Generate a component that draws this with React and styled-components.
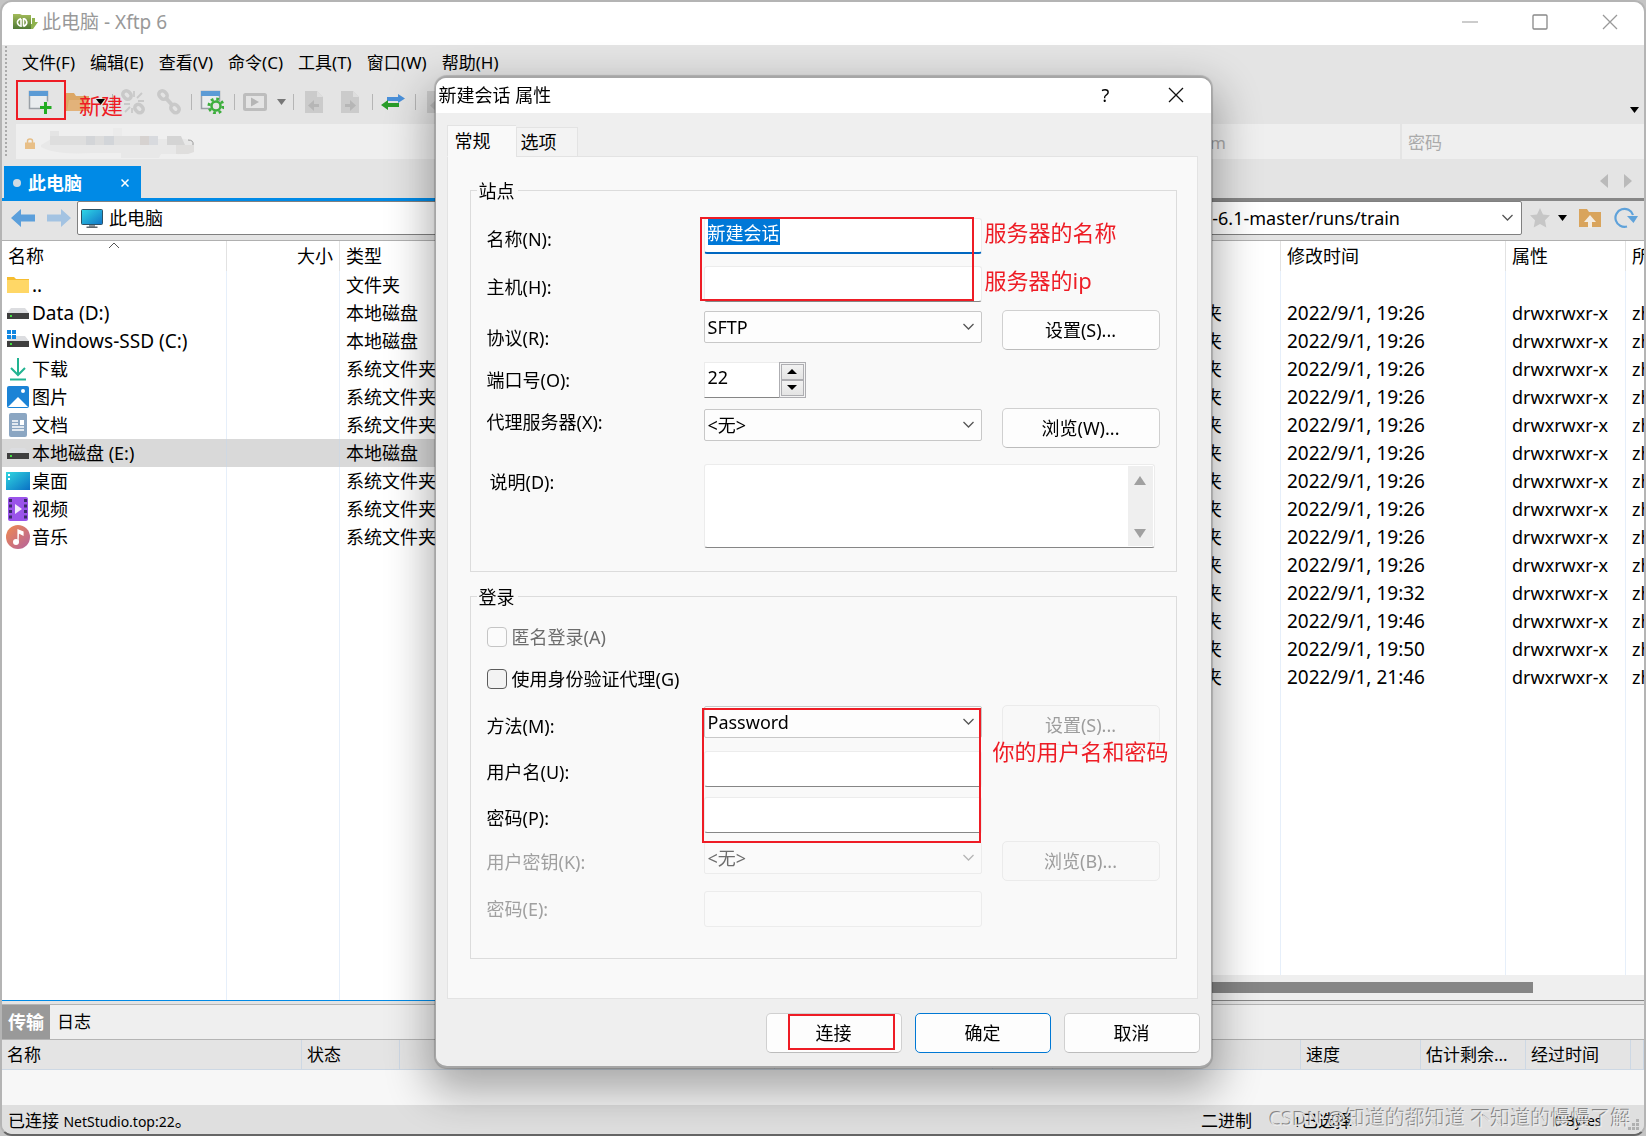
import React, { useEffect, useRef } from "react";
import styled, { createGlobalStyle, css } from "styled-components";

const RED = "#ee1c25";
const BLUE = "#008ae6";

const Global = createGlobalStyle`
  * { box-sizing: border-box; }
  html, body { margin: 0; height: 100%; }
  #root { height: 100%; }
  body {
    background: #c4c4c4;
    color: #000;
    font: 18px/24px "Noto Sans", "Noto Sans CJK SC", sans-serif;
    overflow: hidden;
  }
  button, input, select, textarea {
    font: inherit;
    color: inherit;
    margin: 0;
    padding: 0;
    border: 0;
    border-radius: 0;
    background: none;
    outline: none;
  }
  svg { display: block; flex: none; }
`;

/* ---------- main window ---------- */

const Window = styled.div`
  position: relative;
  display: flex;
  flex-direction: column;
  height: 100vh;
  min-height: 1080px;
  border: 2px solid #b4b4b4;
  border-bottom-color: #666;
  border-radius: 12px;
  background: #e4e4e4;
  overflow: hidden;
`;

const TitleBar = styled.header`
  display: flex;
  align-items: center;
  height: 43px;
  padding: 0 26px 3px 10px;
  gap: 4px;
  background: #fff;
  color: #999;
  h1 { flex: 1; margin: 0; font-size: 19px; font-weight: 400; }
`;

const CaptionButtons = styled.div`
  display: flex;
  gap: 54px;
`;

const IconButton = styled.button`
  display: flex;
  align-items: center;
  justify-content: center;
  width: ${(p) => p.$w || 16}px;
  height: ${(p) => p.$h || 24}px;
  flex: none;
`;

const Bars = styled.div`
  display: flex;
  flex-direction: column;
  height: 113px;
  padding-left: 14px;
  background: radial-gradient(circle, #aaa 1px, transparent 1px) 2px 0 / 4px 4px repeat-y;
`;

const MenuBar = styled.nav`
  display: flex;
  align-items: center;
  height: 36px;
  padding-left: 6px;
  gap: 15px;
  font-size: 17px;
`;

const ToolBar = styled.div`
  position: relative;
  display: flex;
  align-items: center;
  height: 43px;
  padding-bottom: 2px;
`;

const Divider = styled.span`
  width: 7px;
  height: 16px;
  border-left: 1px solid #b5b5b5;
  margin-left: 4px;
  margin-right: -4px;
`;

const Spacer = styled.span`
  flex: 1;
`;

const MoreButton = styled(IconButton)`
  align-self: flex-end;
`;

const SessionBar = styled.div`
  display: grid;
  grid-template-columns: 1fr 210px 242px;
  column-gap: 2px;
  height: 34px;
  color: #aaa;
  font-size: 17px;
`;

const SessionCell = styled.div`
  display: flex;
  align-items: center;
  min-width: 0;
  padding: 3px ${(p) => p.$pad || 6}px 0;
  gap: 6px;
  background: #efefef;
  input { width: 100%; min-width: 0; }
  input::placeholder { color: #aaa; opacity: 1; }
`;

const Panes = styled.main`
  display: grid;
  grid-template-columns: 1fr 1fr;
  flex: 1;
  min-height: 0;
`;

const Pane = styled.section`
  display: flex;
  flex-direction: column;
  min-width: 0;
  min-height: 0;
  border-bottom: 1px solid ${(p) => p.$accent};
`;

const TabStrip = styled.div`
  display: flex;
  align-items: flex-end;
  justify-content: ${(p) => p.$end ? "flex-end" : "flex-start"};
  height: 43px;
  padding: 0 ${(p) => p.$end ? 10 : 2}px;
  gap: 12px;
  border-bottom: 3px solid ${(p) => p.$accent};
`;

const PaneTab = styled.div`
  display: flex;
  align-items: center;
  width: 137px;
  height: 32px;
  padding: 2px 12px 0 9px;
  gap: 7px;
  background: ${BLUE};
  color: #fff;
  font-weight: 700;
  i { width: 8px; height: 8px; border-radius: 50%; background: #cfdbe3; }
  span { flex: 1; }
`;

const StripArrow = styled(IconButton)`
  height: 34px;
  width: 12px;
`;

const NavBar = styled.div`
  display: flex;
  align-items: center;
  height: 40px;
  padding: 0 5px 5px 4px;
  border-bottom: 1px solid #b0b0b0;
`;

const PathBox = styled.div`
  display: flex;
  align-items: center;
  flex: 1;
  min-width: 0;
  height: 34px;
  padding: 0 8px 0 3px;
  gap: 6px;
  border: 1px solid #808080;
  border-radius: 2px;
  background: #fff;
  input { flex: 1; min-width: 0; }
`;

const RemotePath = styled.input`
  text-align: right;
  padding-right: 96px;
`;

const ListArea = styled.div`
  flex: 1;
  min-height: 0;
  background: #fff;
  overflow: hidden;
`;

const FileTable = styled.table`
  width: 100%;
  height: 100%;
  table-layout: fixed;
  border-collapse: separate;
  border-spacing: 0;
  th, td {
    padding: 0 0 0 6px;
    text-align: left;
    font-weight: 400;
    white-space: nowrap;
    overflow: hidden;
    border-right: 1px solid #e6effa;
  }
  th { height: 30px; border-right-color: #e2e2e2; position: relative; }
  th:last-child, td:last-child { border-right: 0; }
  th.size { text-align: right; padding-right: 6px; }
  tr.item td { height: 28px; }
  tr.selected td { background: #d9d9d9; border-right-color: #cfd8e2; }
`;

const SortMark = styled.svg`
  position: absolute;
  top: 1px;
  left: 106px;
`;

const NameCell = styled.span`
  display: flex;
  align-items: center;
  gap: 2px;
  margin-left: -2px;
`;

/* Latin-only cell text is set one step larger than the Chinese text beside it. */
const LatinCell = styled.span`
  font-size: 19px;
`;

const ScrollTrack = styled.div`
  height: 25px;
  padding: 7px 111px 7px 0;
  background: #efefef;
  div { height: 11px; background: #868686; }
`;

const Transfer = styled.section`
  margin-top: 3px;
  border-top: 1px solid #b4b4b4;
  background: #f7f7f7;
  height: 101px;
  font-size: 17px;
`;

const TransferTabs = styled.div`
  display: flex;
  height: 35px;
  background: #efefef;
  border-bottom: 1px solid #b4b4b4;
`;

const TransferTab = styled.button`
  padding: 0 7px;
  ${(p) => p.$active && css`
    width: 48px;
    padding: 0 6px;
    background: #999;
    color: #fff;
    font-size: 18px;
    font-weight: 700;
  `}
`;

const QueueTable = styled.table`
  width: 100%;
  table-layout: fixed;
  border-spacing: 0;
  background: #e4e4e4;
  th {
    height: 30px;
    padding: 0 0 0 5px;
    text-align: left;
    font-weight: 400;
    white-space: nowrap;
    overflow: hidden;
    border-right: 1px solid #cdd8e4;
    border-bottom: 1px solid #cdd8e4;
  }
`;

const StatusBar = styled.footer`
  position: relative;
  display: grid;
  grid-template-columns: 1fr 92px 261px 90px;
  align-items: center;
  height: 29px;
  padding: 3px 0 0 6px;
  background: #dfdfdf;
  font-size: 17px;
`;

const Latin = styled.span`
  font-size: 14px;
`;

const Watermark = styled.div`
  position: absolute;
  right: 13px;
  bottom: 3px;
  font-size: 20px;
  color: rgba(238, 238, 238, 0.85);
  text-shadow: -1px -1px 0 rgba(110, 110, 110, 0.8);
  white-space: nowrap;
`;

const ResizeGrip = styled.svg`
  position: absolute;
  right: 4px;
  bottom: 3px;
`;

/* ---------- annotations ---------- */

const RedBox = styled.span`
  position: absolute;
  left: ${(p) => p.$x}px;
  top: ${(p) => p.$y}px;
  width: ${(p) => p.$w}px;
  height: ${(p) => p.$h}px;
  border: 2px solid ${RED};
  pointer-events: none;
`;

const RedNote = styled.span`
  position: absolute;
  left: ${(p) => p.$x}px;
  top: ${(p) => p.$y}px;
  color: ${RED};
  font-size: 22px;
  line-height: 28px;
  white-space: nowrap;
`;

/* ---------- dialog ---------- */

const Overlay = styled.div`
  position: fixed;
  inset: 0;
  display: flex;
  align-items: center;
  justify-content: center;
  padding-top: 7px;
`;

const Dialog = styled.div`
  position: relative;
  width: 777px;
  border: 1px solid #a6a6a6;
  border-top-width: 2px;
  border-bottom-width: 2px;
  border-radius: 12px;
  background: #efefef;
  box-shadow: 0 0 1px 1px rgba(0, 0, 0, 0.18), 0 18px 44px 6px rgba(0, 0, 0, 0.32);
`;

const DialogTitle = styled.header`
  display: flex;
  align-items: center;
  height: 35px;
  padding: 0 27px 1px 3px;
  gap: 56px;
  border-radius: 10px 10px 0 0;
  background: #fff;
  h2 { flex: 1; margin: 0; font-size: 18px; font-weight: 400; }
`;

const DialogBody = styled.form`
  padding: 12px 13px 13px 11px;
`;

const Tabs = styled.div`
  position: relative;
  display: flex;
  align-items: flex-end;
  margin-bottom: -1px;
`;

const Tab = styled.button`
  width: ${(p) => p.$active ? 69 : 62}px;
  height: ${(p) => p.$active ? 32 : 30}px;
  padding: 0 0 0 ${(p) => p.$active ? 7 : 4}px;
  text-align: left;
  border: 1px solid #e3e3e3;
  background: #f3f3f3;
  ${(p) => p.$active && css`
    background: #f9f9f9;
    border-bottom-color: #f9f9f9;
    border-right: 0;
  `}
`;

const TabPanel = styled.div`
  display: flex;
  flex-direction: column;
  gap: 13px;
  padding: 22px 20px 39px 22px;
  border: 1px solid #e3e3e3;
  background: #f9f9f9;
`;

const Group = styled.fieldset`
  min-width: 0;
  margin: 0;
  padding: ${(p) => p.$top}px 16px ${(p) => p.$bottom}px;
  border: 1px solid #dcdcdc;
  legend { margin-left: -10px; padding: 0 3px 0 2px; line-height: 24px; }
`;

const Row = styled.div`
  display: grid;
  grid-template-columns: 217px 278px 158px;
  align-items: start;
  margin-top: ${(p) => p.$gap || 0}px;
  & > button { margin-left: 20px; }
`;

const Label = styled.label`
  padding-top: ${(p) => p.$top ?? 9}px;
  padding-left: ${(p) => p.$indent ? 3 : 0}px;
  color: ${(p) => p.$off ? "#a0a0a0" : "#000"};
`;

const TextBox = styled.input`
  width: 100%;
  height: 36px;
  padding: 0 3px 6px;
  border: 1px solid #ececec;
  border-bottom: 1px solid #868686;
  border-radius: 3px;
  background: #fff;
  &:disabled { border-color: #ececec; background: #fafafa; }
  ${(p) => p.$focus && css`
    border-bottom: 2px solid #0067c0;
    &::selection { background: #0078d7; color: #fff; }
  `}
`;

const SelectFrame = styled.div`
  position: relative;
  margin: 1px 0 7px;
  color: ${(p) => p.$off ? "#6d6d6d" : "#000"};
  select {
    display: block;
    appearance: none;
    width: 100%;
    height: 32px;
    padding: 0 3px;
    border: 1px solid ${(p) => p.$off ? "#ececec" : "#c8c8c8"};
    border-radius: 2px;
    background: ${(p) => p.$off ? "#fafafa" : "#fdfdfd"};
    opacity: 1;
  }
  svg {
    position: absolute;
    right: 8px;
    top: 12px;
    pointer-events: none;
  }
`;

const PushButton = styled.button`
  width: ${(p) => p.$w || 158}px;
  height: 40px;
  border: 1px solid #d0d0d0;
  border-bottom-color: #bcbcbc;
  border-radius: 5px;
  background: #fdfdfd;
  &:disabled { border-color: #ebebeb; background: #f8f8f8; color: #9d9d9d; }
  ${(p) => p.$primary && css`
    border-color: #0078d4;
  `}
`;

const PortBox = styled.div`
  display: flex;
  width: 102px;
  height: 36px;
  input {
    flex: 1;
    min-width: 0;
    padding: 0 3px 6px;
    border: 1px solid #ececec;
    border-right: 0;
    border-bottom-color: #868686;
    background: #fff;
  }
`;

const Spinner = styled.div`
  display: flex;
  flex-direction: column;
  width: 27px;
  padding: 1px;
  border: 1px solid #aeaeb2;
  background: #f4f4f4;
  button {
    display: flex;
    flex: 1;
    align-items: center;
    justify-content: center;
    border: 1px solid #aeaeb2;
    background: linear-gradient(#f2f2f2, #e4e4e4);
  }
`;

const NoteBox = styled.div`
  display: flex;
  width: 451px;
  height: 84px;
  padding: 1px;
  border: 1px solid #ececec;
  border-bottom-color: #868686;
  border-radius: 3px;
  background: #fff;
  textarea { flex: 1; resize: none; overflow: hidden; }
`;

const NoteScroll = styled.div`
  display: flex;
  flex-direction: column;
  justify-content: space-between;
  align-items: center;
  width: 25px;
  padding: 10px 0 8px;
  background: #efefef;
`;

const CheckLabel = styled.label`
  display: flex;
  align-items: center;
  height: 32px;
  gap: 5px;
  margin-top: ${(p) => p.$gap || 0}px;
  color: ${(p) => p.$off ? "#6d6d6d" : "#000"};
  input {
    appearance: none;
    width: 20px;
    height: 20px;
    border: 1px solid ${(p) => p.$off ? "#c5c5c5" : "#5c5c5c"};
    border-radius: 4px;
    background: ${(p) => p.$off ? "#fbfbfb" : "#f3f3f3"};
  }
`;

const DialogFooter = styled.div`
  display: flex;
  justify-content: flex-end;
  gap: 13px;
  margin-top: 14px;
  margin-right: -2px;
`;

/* ---------- icons ---------- */

const Triangle = ({ dir = "down", color = "#000", w = 9, h = 6 }) => {
  const d = {
    down: `M0 0H${w}L${w / 2} ${h}Z`,
    up: `M0 ${h}H${w}L${w / 2} 0Z`,
    left: `M${w} 0V${h}L0 ${h / 2}Z`,
    right: `M0 0V${h}L${w} ${h / 2}Z`,
  }[dir];
  return <svg width={w} height={h}><path d={d} fill={color} /></svg>;
};

const Chevron = ({ color = "#555" }) => (
  <svg width="11" height="8" fill="none" stroke={color} strokeWidth="1.3"><path d="M0.5 1L5.5 6L10.5 1" /></svg>
);

const Cross = ({ color, size = 16, sw = 1.3 }) => (
  <svg width={size} height={size} viewBox="0 0 16 16" fill="none" stroke={color} strokeWidth={sw}><path d="M1 1L15 15M15 1L1 15" /></svg>
);

const AppIcon = () => (
  <svg width="26" height="20" viewBox="0 0 26 20">
    <defs><linearGradient id="app" x1="0" y1="0" x2="0" y2="1"><stop offset="0" stopColor="#a3bb5a" /><stop offset="1" stopColor="#4f7a35" /></linearGradient></defs>
    <path d="M1 2h7l2 1h9v14H1z" fill="url(#app)" />
    <path d="M20 6h3v4h3l-5 7h-2v-5h1z" fill="#8fb34f" />
    <g fill="none" stroke="#fff" strokeWidth="1.600"><path d="M9 15V7M9 6.500Q5 8 5.500 11Q6 13 8 14" /><path d="M11.500 6v8.500M11.500 14.500Q15 13 14.800 10Q14 7 12 6.500" /></g>
  </svg>
);

const WindowGlyph = () => (
  <>
    <path d="M1.500 1.500h18v17h-18z" fill="#e9ecee" stroke="#9aa0a6" strokeWidth="1.500" />
    <path d="M1 1h19v5H1z" fill="#5b9bd5" />
  </>
);

const NewIcon = () => (
  <svg width="24" height="24" viewBox="0 0 24 24"><WindowGlyph /><path d="M12 17.500h12M18 11.500v12" stroke="#e4e4e4" strokeWidth="6" /><path d="M12 17.500h11.500M17.500 12v12" stroke="#22ac22" strokeWidth="3" /></svg>
);

const GearWindowIcon = () => (
  <svg width="24" height="24" viewBox="0 0 24 24"><WindowGlyph />
    <circle cx="16" cy="16" r="6" fill="#e4e4e4" />
    <circle cx="16" cy="16" r="7" fill="none" stroke="#3dae3d" strokeWidth="3" strokeDasharray="2.750 2.750" />
    <circle cx="16" cy="16" r="4.500" fill="none" stroke="#3dae3d" strokeWidth="2.500" />
  </svg>
);

const FolderIcon = () => (
  <svg width="26" height="20" viewBox="0 0 26 20"><path d="M0 1h9l2 3h13v15H0z" fill="#dca765" /><path d="M4 8h20v11H2z" fill="#e2b27a" /></svg>
);

const ChainIcon = ({ broken }) => (
  <svg width="26" height="26" viewBox="0 0 26 26" fill="none" stroke="#c9c9c9" strokeWidth="3.500">
    <rect x="2.500" y="2.500" width="9" height="7" rx="3.500" transform="rotate(45 7 6)" />
    <rect x="14.500" y="16" width="9" height="7" rx="3.500" transform="rotate(45 19 19.500)" />
    {broken ? <path d="M14 8V2M17 9l5-5M18 12h6M4 15h6M5 23l5-5M12 24v-5" strokeWidth="1.800" /> : <path d="M9 8l8 9" strokeWidth="4" />}
  </svg>
);

const PlayIcon = () => (
  <svg width="24" height="18" viewBox="0 0 24 18"><rect x="1.500" y="1.500" width="21" height="15" rx="1" fill="none" stroke="#bdbdbd" strokeWidth="3" /><path d="M8 4.500L16 9L8 13.500Z" fill="#b5b5b5" /></svg>
);

const DocIcon = ({ flip }) => (
  <svg width="20" height="22" viewBox="0 0 20 22"><path d="M1 0h12l6 6v16H1z" fill="#cbcbcb" /><path d="M13 0v6h6z" fill="#dedede" />
    <path d={flip ? "M5 13h5V9l6 5.500L10 20v-4H5z" : "M15 13h-5V9l-6 5.500L10 20v-4h5z"} fill="#b6b6b6" />
  </svg>
);

const SwapIcon = () => (
  <svg width="24" height="18" viewBox="0 0 24 18"><path d="M6 4h11V1l7 4.500L17 10V8H6z" fill="#4a90d9" /><path d="M18 10H7V7l-7 5l7 5v-3h11z" fill="#2a9d2a" /></svg>
);

const LockIcon = () => (
  <svg width="10" height="11" viewBox="0 0 10 11"><path d="M2.500 5V3a2.500 2 0 015 0v2" fill="none" stroke="#e6bd85" strokeWidth="1.500" /><path d="M0 4.500h10V11H0z" fill="#e8bf87" /></svg>
);

const Smudge = () => (
  <svg width="154" height="32" viewBox="0 0 154 32">
    <path d="M0 18L10 12H130Q152 10 152 18V24Q148 28 136 27H120L118 31H80V26H50Q14 28 0 20Z" fill="#e8e8e8" />
    <path d="M9 4h9v5H9z" fill="#e4e4e4" /><path d="M72 1h9v8h-9z" fill="#ebebeb" />
    <path d="M9 9h36v9H9z" fill="#dedede" /><path d="M45 9h9v9h-9z" fill="#d3d5d8" /><path d="M54 9h9v9h-9z" fill="#dcdcdc" />
    <path d="M63 9h10v9H63z" fill="#d2d5d9" /><path d="M73 9h26v9H73z" fill="#e0e0e0" /><path d="M99 9h9v9h-9z" fill="#d6d2d0" />
    <path d="M108 9h9v9h-9z" fill="#d8dade" /><path d="M126 9h14l4 9h-18z" fill="#d4d4d4" /><path d="M135 18h18v7l-6 2h-12z" fill="#dfdedd" />
    <path d="M147 13q6 0 5 5" fill="none" stroke="#999" />
  </svg>
);

const ArrowIcon = ({ flip, color }) => (
  <svg width="24" height="18" viewBox="0 0 24 18"><path d={flip ? "M24 9L14 0V5.500H0V12.500H14V18Z" : "M0 9L10 0V5.500H24V12.500H10V18Z"} fill={color} /></svg>
);

const MonitorIcon = () => (
  <svg width="22" height="19" viewBox="0 0 22 19">
    <defs><linearGradient id="mon" x1="0" y1="0" x2="1" y2="1"><stop offset="0" stopColor="#2fd8e6" /><stop offset="1" stopColor="#1173c8" /></linearGradient></defs>
    <path d="M8 15h6v3H8z" fill="#8a949c" /><path d="M5.500 17.500h11v1.500h-11z" fill="#5d666d" />
    <rect x="0.500" y="0.500" width="21" height="15" rx="1" fill="url(#mon)" stroke="#2d5266" />
  </svg>
);

const StarIcon = () => (
  <svg width="20" height="20" viewBox="0 0 20 20"><path d="M10 0l3 6.500 7 .8-5 4.900 1.300 7.300L10 16l-6.300 3.500L5 12.200 0 7.300l7-.8z" fill="#c6c6c6" /></svg>
);

const UpFolderIcon = () => (
  <svg width="22" height="19" viewBox="0 0 22 19"><path d="M0 0h8l2 3h12v15H0z" fill="#d9a45c" /><path d="M11 6l6 7h-4v6H9v-6H5z" fill="#f3ece2" /></svg>
);

const RefreshIcon = () => (
  <svg width="24" height="22" viewBox="0 0 24 22"><path d="M13 19.500A9 9 0 1119 8" fill="none" stroke="#5fa2da" strokeWidth="2.200" /><path d="M13 9h11l-4.500 7z" fill="#5fa2da" /></svg>
);

const Drive = () => (
  <>
    <path d="M5 7h14l4 5H1z" fill="#dcdde0" /><path d="M1 12h22v6H1z" fill="#3f3f3f" /><path d="M4 14h2v2H4z" fill="#3fe03f" />
  </>
);

const fileIcons = {
  folder: <><path d="M1 4h7l2 2h13v14H1z" fill="#f6bd30" /><path d="M1 7h22v13H1z" fill="#ffd766" /></>,
  drive: <Drive />,
  system: <><Drive /><path d="M1 1h4v4H1zM6 1h4v4H6zM1 6h4v4H1zM6 6h4v4H6z" fill="#1186e0" /></>,
  download: <path d="M12 1v17M5 11l7 7 7-7M4 22.500h16" fill="none" stroke="#22b391" strokeWidth="2" />,
  picture: <><rect x="1" y="1" width="22" height="22" rx="2" fill="#1b83d6" /><path d="M2 22L12 12L22 22z" fill="#fff" /><circle cx="17" cy="6" r="2" fill="#fff" /></>,
  document: <><rect x="3" y="0" width="18" height="24" rx="2" fill="#8ba6c2" /><path d="M6 8h6M6 11h6M6 14h12M6 17h12" stroke="#fff" strokeWidth="1.500" /><path d="M14 7h4v5h-4z" fill="#fff" /></>,
  desktop: <>
    <defs><linearGradient id="desk" x1="0" y1="0" x2="1" y2="1"><stop offset="0" stopColor="#30d6e0" /><stop offset="1" stopColor="#0a70c4" /></linearGradient></defs>
    <path d="M0 3h24v18H0z" fill="url(#desk)" /><path d="M2 5h2v2H2zM2 9h2v2H2z" fill="#fff" />
  </>,
  video: <><rect x="2" y="0" width="20" height="24" rx="2" fill="#9a53ea" /><path d="M4.500 2v20M19.500 2v20" stroke="#3b2a68" strokeWidth="3" strokeDasharray="3 2.500" /><path d="M9 7l7 5-7 5z" fill="#f1e8fb" /></>,
  music: <>
    <defs><linearGradient id="mus" x1="0" y1="0" x2="1" y2="1"><stop offset="0" stopColor="#f08a4e" /><stop offset="1" stopColor="#b4629e" /></linearGradient></defs>
    <circle cx="12" cy="12" r="12" fill="url(#mus)" /><path d="M12 17V5l5 2v3l-4-2" fill="#fff" stroke="#fff" strokeWidth="1.200" /><circle cx="10" cy="17" r="3" fill="#fff" />
  </>,
};

const FileIcon = ({ kind }) => <svg width="24" height="24" viewBox="0 0 24 24">{fileIcons[kind]}</svg>;

/* ---------- data ---------- */

const menus = ["文件(F)", "编辑(E)", "查看(V)", "命令(C)", "工具(T)", "窗口(W)", "帮助(H)"];

const localFiles = [
  ["folder", "..", "文件夹"],
  ["drive", "Data (D:)", "本地磁盘"],
  ["system", "Windows-SSD (C:)", "本地磁盘"],
  ["download", "下载", "系统文件夹"],
  ["picture", "图片", "系统文件夹"],
  ["document", "文档", "系统文件夹"],
  ["drive", "本地磁盘 (E:)", "本地磁盘", true],
  ["desktop", "桌面", "系统文件夹"],
  ["video", "视频", "系统文件夹"],
  ["music", "音乐", "系统文件夹"],
];

const remoteTimes = [...Array(10).fill("19:26"), "19:32", "19:46", "19:50", "21:46"];

const isLatin = (text) => /^[\x20-\x7e]+$/.test(text);

/* ---------- views ---------- */

const LocalPane = () => (
  <Pane $accent={BLUE}>
    <TabStrip $accent={BLUE}>
      <PaneTab><i /><span>此电脑</span><IconButton type="button" $w={8} aria-label="关闭标签"><Cross color="#fff" size={8} sw={3} /></IconButton></PaneTab>
    </TabStrip>
    <NavBar>
      <IconButton type="button" $w={34} aria-label="后退"><ArrowIcon color="#5b9fdb" /></IconButton>
      <IconButton type="button" $w={37} aria-label="前进"><ArrowIcon flip color="#a3c3e2" /></IconButton>
      <PathBox><MonitorIcon /><input aria-label="本地路径" defaultValue="此电脑" /></PathBox>
    </NavBar>
    <ListArea>
      <FileTable>
        <colgroup><col style={{ width: 225 }} /><col style={{ width: 113 }} /><col /></colgroup>
        <thead><tr>
          <th>名称<SortMark width="12" height="8" fill="none" stroke="#555"><path d="M1 6L6 1L11 6" /></SortMark></th>
          <th className="size">大小</th><th>类型</th>
        </tr></thead>
        <tbody>
          {localFiles.map(([kind, name, type, selected]) => (
            <tr key={name} className={selected ? "item selected" : "item"}>
              <td><NameCell><FileIcon kind={kind} />{isLatin(name) ? <LatinCell>{name}</LatinCell> : name}</NameCell></td><td /><td>{type}</td>
            </tr>
          ))}
          <tr><td /><td /><td /></tr>
        </tbody>
      </FileTable>
    </ListArea>
  </Pane>
);

const RemotePane = () => (
  <Pane $accent="#868686">
    <TabStrip $end $accent="#868686">
      <StripArrow type="button" aria-label="上一个标签"><Triangle dir="left" color="#bababa" w={8} h={14} /></StripArrow>
      <StripArrow type="button" aria-label="下一个标签"><Triangle dir="right" color="#bababa" w={8} h={14} /></StripArrow>
    </TabStrip>
    <NavBar>
      <PathBox><RemotePath aria-label="远程路径" defaultValue="-6.1-master/runs/train" /><Chevron /></PathBox>
      <IconButton type="button" $w={36} aria-label="收藏"><StarIcon /></IconButton>
      <IconButton type="button" $w={9} aria-label="收藏列表"><Triangle /></IconButton>
      <IconButton type="button" $w={46} aria-label="上级目录"><UpFolderIcon /></IconButton>
      <IconButton type="button" $w={26} aria-label="刷新"><RefreshIcon /></IconButton>
    </NavBar>
    <ListArea>
      <FileTable>
        <colgroup><col /><col style={{ width: 119 }} /><col style={{ width: 225 }} /><col style={{ width: 120 }} /><col style={{ width: 18 }} /></colgroup>
        <thead><tr><th /><th /><th>修改时间</th><th>属性</th><th>所</th></tr></thead>
        <tbody>
          <tr className="item"><td /><td /><td /><td /><td /></tr>
          {remoteTimes.map((t, i) => (
            <tr key={i} className="item"><td /><td>文件夹</td><td><LatinCell>2022/9/1, {t}</LatinCell></td><td>drwxrwxr-x</td><td>zh</td></tr>
          ))}
          <tr><td /><td /><td /><td /><td /></tr>
        </tbody>
      </FileTable>
    </ListArea>
    <ScrollTrack><div /></ScrollTrack>
  </Pane>
);

const Dropdown = ({ id, value, disabled }) => (
  <SelectFrame $off={disabled}>
    <select id={id} defaultValue={value} disabled={disabled}><option>{value}</option></select>
    <Chevron color={disabled ? "#b5b5b5" : "#555"} />
  </SelectFrame>
);

const SessionDialog = () => {
  const nameRef = useRef(null);
  useEffect(() => {
    nameRef.current.focus();
    nameRef.current.select();
  }, []);
  return (
    <Overlay>
      <Dialog role="dialog" aria-labelledby="dlg-title">
        <DialogTitle>
          <h2 id="dlg-title">新建会话 属性</h2>
          <IconButton type="button" $w={12} aria-label="帮助">?</IconButton>
          <IconButton type="button" $w={16} aria-label="关闭"><Cross color="#111" /></IconButton>
        </DialogTitle>
        <DialogBody onSubmit={(e) => e.preventDefault()}>
          <Tabs role="tablist">
            <Tab type="button" role="tab" aria-selected="true" $active>常规</Tab>
            <Tab type="button" role="tab" aria-selected="false">选项</Tab>
          </Tabs>
          <TabPanel role="tabpanel">
            <Group $top={15} $bottom={23}>
              <legend>站点</legend>
              <Row>
                <Label htmlFor="name">名称(N):</Label>
                <TextBox id="name" ref={nameRef} defaultValue="新建会话" $focus />
              </Row>
              <Row $gap={12}>
                <Label htmlFor="host">主机(H):</Label>
                <TextBox id="host" />
              </Row>
              <Row $gap={8}>
                <Label htmlFor="protocol" $top={16}>协议(R):</Label>
                <Dropdown id="protocol" value="SFTP" />
                <PushButton type="button">设置(S)...</PushButton>
              </Row>
              <Row $gap={12}>
                <Label htmlFor="port" $top={6}>端口号(O):</Label>
                <PortBox>
                  <input id="port" inputMode="numeric" defaultValue="22" />
                  <Spinner>
                    <button type="button" aria-label="增加"><Triangle dir="up" h={5} w={10} /></button>
                    <button type="button" aria-label="减少"><Triangle h={5} w={10} /></button>
                  </Spinner>
                </PortBox>
              </Row>
              <Row $gap={10}>
                <Label htmlFor="proxy" $top={2}>代理服务器(X):</Label>
                <Dropdown id="proxy" value="<无>" />
                <PushButton type="button">浏览(W)...</PushButton>
              </Row>
              <Row $gap={16}>
                <Label htmlFor="note" $top={6} $indent>说明(D):</Label>
                <NoteBox>
                  <textarea id="note" />
                  <NoteScroll><Triangle dir="up" color="#a0a0a0" w={12} h={9} /><Triangle color="#a0a0a0" w={12} h={9} /></NoteScroll>
                </NoteBox>
              </Row>
            </Group>
            <Group $top={12} $bottom={31}>
              <legend>登录</legend>
              <CheckLabel $off><input type="checkbox" disabled />匿名登录(A)</CheckLabel>
              <CheckLabel $gap={10}><input type="checkbox" />使用身份验证代理(G)</CheckLabel>
              <Row $gap={10}>
                <Label htmlFor="method">方法(M):</Label>
                <Dropdown id="method" value="Password" />
                <PushButton type="button" disabled>设置(S)...</PushButton>
              </Row>
              <Row $gap={6}>
                <Label htmlFor="user">用户名(U):</Label>
                <TextBox id="user" />
              </Row>
              <Row $gap={10}>
                <Label htmlFor="pass">密码(P):</Label>
                <TextBox id="pass" type="password" />
              </Row>
              <Row $gap={8}>
                <Label htmlFor="key" $off>用户密钥(K):</Label>
                <Dropdown id="key" value="<无>" disabled />
                <PushButton type="button" disabled>浏览(B)...</PushButton>
              </Row>
              <Row $gap={10}>
                <Label htmlFor="keypass" $top={6} $off>密码(E):</Label>
                <TextBox id="keypass" type="password" disabled />
              </Row>
            </Group>
          </TabPanel>
          <DialogFooter>
            <PushButton type="button" $w={136}>连接</PushButton>
            <PushButton type="submit" $w={136} $primary>确定</PushButton>
            <PushButton type="button" $w={136}>取消</PushButton>
          </DialogFooter>
        </DialogBody>
        <RedBox $x={264} $y={139} $w={274} $h={84} />
        <RedNote $x={549} $y={140}>服务器的名称</RedNote>
        <RedNote $x={549} $y={188}>服务器的ip</RedNote>
        <RedBox $x={266} $y={630} $w={279} $h={135} />
        <RedNote $x={557} $y={659}>你的用户名和密码</RedNote>
        <RedBox $x={352} $y={936} $w={107} $h={36} />
      </Dialog>
    </Overlay>
  );
};

export default function App() {
  return (
    <>
      <Global />
      <Window>
        <TitleBar>
          <AppIcon />
          <h1>此电脑 - Xftp 6</h1>
          <CaptionButtons>
            <IconButton type="button" aria-label="最小化"><svg width="16" height="2"><path d="M0 1h16" stroke="#999" /></svg></IconButton>
            <IconButton type="button" aria-label="最大化"><svg width="16" height="16" fill="none" stroke="#888"><rect x="1" y="1" width="14" height="14" rx="1" strokeWidth="1.300" /></svg></IconButton>
            <IconButton type="button" aria-label="关闭窗口"><Cross color="#999" /></IconButton>
          </CaptionButtons>
        </TitleBar>
        <Bars>
          <MenuBar>{menus.map((m) => <button type="button" key={m}>{m}</button>)}</MenuBar>
          <ToolBar>
            <IconButton type="button" $w={48} aria-label="新建会话"><NewIcon /></IconButton>
            <IconButton type="button" $w={28} aria-label="打开"><FolderIcon /></IconButton>
            <IconButton type="button" $w={16} aria-label="打开列表"><Triangle /></IconButton>
            <Divider />
            <IconButton type="button" $w={36} aria-label="断开"><ChainIcon broken /></IconButton>
            <IconButton type="button" $w={36} aria-label="重新连接"><ChainIcon /></IconButton>
            <Divider />
            <IconButton type="button" $w={36} aria-label="属性"><GearWindowIcon /></IconButton>
            <Divider />
            <IconButton type="button" $w={36} aria-label="运行"><PlayIcon /></IconButton>
            <IconButton type="button" $w={16} aria-label="运行列表"><Triangle color="#777" /></IconButton>
            <Divider />
            <IconButton type="button" $w={36} aria-label="下载"><DocIcon /></IconButton>
            <IconButton type="button" $w={36} aria-label="上传"><DocIcon flip /></IconButton>
            <Divider />
            <IconButton type="button" $w={36} aria-label="同步"><SwapIcon /></IconButton>
            <Divider />
            <IconButton type="button" $w={36} aria-label="复制"><DocIcon /></IconButton>
            <Spacer />
            <MoreButton type="button" $w={20} aria-label="更多"><Triangle /></MoreButton>
            <RedBox $x={0} $y={-1} $w={50} $h={40} />
            <RedNote $x={63} $y={10}>新建</RedNote>
          </ToolBar>
          <SessionBar>
            <SessionCell $pad={9}><LockIcon /><Smudge /></SessionCell>
            <SessionCell $pad={20}><input aria-label="用户名" defaultValue="m" /></SessionCell>
            <SessionCell><input aria-label="密码" type="password" placeholder="密码" /></SessionCell>
          </SessionBar>
        </Bars>
        <Panes>
          <LocalPane />
          <RemotePane />
        </Panes>
        <Transfer>
          <TransferTabs>
            <TransferTab type="button" $active>传输</TransferTab>
            <TransferTab type="button">日志</TransferTab>
          </TransferTabs>
          <QueueTable>
            <colgroup>
              {[300, 98, 375, 218, 60].map((w) => <col key={w} style={{ width: w }} />)}
              <col />
              <col style={{ width: 120 }} /><col style={{ width: 105 }} /><col style={{ width: 105 }} /><col style={{ width: 13 }} />
            </colgroup>
            <thead><tr><th>名称</th><th>状态</th><th /><th /><th /><th /><th>速度</th><th>估计剩余...</th><th>经过时间</th><th /></tr></thead>
          </QueueTable>
        </Transfer>
        <StatusBar>
          <span>已连接 <Latin>NetStudio.top:22</Latin>。</span>
          <span>二进制</span>
          <span><Latin>1</Latin>已选择</span>
          <Latin>0 Bytes</Latin>
          <ResizeGrip width="12" height="12" fill="#b0b0b0"><path d="M8 0h3v3H8zM4 4h3v3H4zM8 4h3v3H8zM0 8h3v3H0zM4 8h3v3H4zM8 8h3v3H8z" /></ResizeGrip>
          <Watermark>CSDN @知道的都知道 不知道的慢慢了解</Watermark>
        </StatusBar>
      </Window>
      <SessionDialog />
    </>
  );
}
